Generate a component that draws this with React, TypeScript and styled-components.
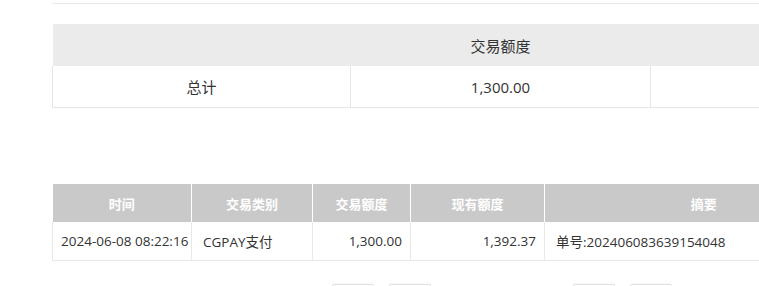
import React from "react";
import styled, { createGlobalStyle } from "styled-components";

const GlobalStyle = createGlobalStyle`
  html, body {
    margin: 0;
    padding: 0;
    background: #ffffff;
    overflow: hidden;
  }
  body {
    font-family: "Open Sans", "Noto Sans CJK SC", sans-serif;
    color: #333333;
  }
`;

const Page = styled.div`
  padding-left: 52px;
  width: 1000px;
`;

const TopRule = styled.div`
  height: 3px;
  border-bottom: 1px solid #e8e8e8;
  margin-bottom: 20px;
`;

const SummaryTable = styled.table`
  width: 896px;
  border-collapse: collapse;
  table-layout: fixed;
  font-size: 15px;
  color: #333333;
`;

const SummaryHead = styled.th`
  height: 42px;
  padding: 0;
  background: #ebebeb;
  font-weight: normal;
  text-align: center;
  border: none;
`;

const SummaryCell = styled.td`
  height: 41px;
  padding: 0;
  text-align: center;
  border: 1px solid #e6e6e6;
  border-top: none;
`;

const Spacer = styled.div<{ $h: number }>`
  height: ${(p) => p.$h}px;
`;

const LogTable = styled.table`
  border-collapse: collapse;
  table-layout: fixed;
  width: 810px;
  font-size: 13.5px;
  color: #333333;
`;

const LogHead = styled.th`
  height: 38px;
  padding: 0;
  background: #c9c9c9;
  color: #ffffff;
  font-size: 13px;
  font-weight: bold;
  text-align: center;
  border-left: 1px solid #ffffff;
  &:first-child {
    border-left: none;
  }
`;

const LogCell = styled.td<{ $align?: "left" | "right"; $tight?: boolean }>`
  height: 38px;
  padding: 0 ${(p) => (p.$tight ? 4 : 8)}px 0 ${(p) => (p.$tight ? 8 : 11)}px;
  text-align: ${(p) => p.$align ?? "left"};
  border: 1px solid #e8e8e8;
  border-top: none;
  white-space: nowrap;
  overflow: hidden;
`;

const Pager = styled.div`
  display: flex;
  margin-top: 23px;
  padding-left: 280px;
`;

const PagerGroup = styled.div<{ $gap: number }>`
  display: flex;
  gap: 15px;
  margin-right: ${(p) => p.$gap}px;
`;

const PagerButton = styled.div`
  width: 40px;
  height: 30px;
  border: 1px solid #e2e2e2;
  border-radius: 2px;
  box-shadow: 0 -1px 2px rgba(0, 0, 0, 0.04);
`;

const columns = [
  { title: "时间", width: 139 },
  { title: "交易类别", width: 121 },
  { title: "交易额度", width: 98 },
  { title: "现有额度", width: 134 },
  { title: "摘要", width: 318 },
];

export default function App() {
  return (
    <>
      <GlobalStyle />
      <Page>
        <TopRule />
        <SummaryTable>
          <colgroup>
            <col style={{ width: 298 }} />
            <col style={{ width: 300 }} />
            <col style={{ width: 298 }} />
          </colgroup>
          <thead>
            <tr>
              <SummaryHead />
              <SummaryHead>交易额度</SummaryHead>
              <SummaryHead />
            </tr>
          </thead>
          <tbody>
            <tr>
              <SummaryCell>总计</SummaryCell>
              <SummaryCell>1,300.00</SummaryCell>
              <SummaryCell />
            </tr>
          </tbody>
        </SummaryTable>
        <Spacer $h={76} />
        <LogTable>
          <colgroup>
            {columns.map((c) => (
              <col key={c.title} style={{ width: c.width }} />
            ))}
          </colgroup>
          <thead>
            <tr>
              {columns.map((c) => (
                <LogHead key={c.title}>{c.title}</LogHead>
              ))}
            </tr>
          </thead>
          <tbody>
            <tr>
              <LogCell $tight>2024-06-08 08:22:16</LogCell>
              <LogCell>CGPAY支付</LogCell>
              <LogCell $align="right">1,300.00</LogCell>
              <LogCell $align="right">1,392.37</LogCell>
              <LogCell>单号:202406083639154048</LogCell>
            </tr>
          </tbody>
        </LogTable>
        <Pager>
          <PagerGroup $gap={142}>
            <PagerButton />
            <PagerButton />
          </PagerGroup>
          <PagerGroup $gap={0}>
            <PagerButton />
            <PagerButton />
          </PagerGroup>
        </Pager>
      </Page>
    </>
  );
}
